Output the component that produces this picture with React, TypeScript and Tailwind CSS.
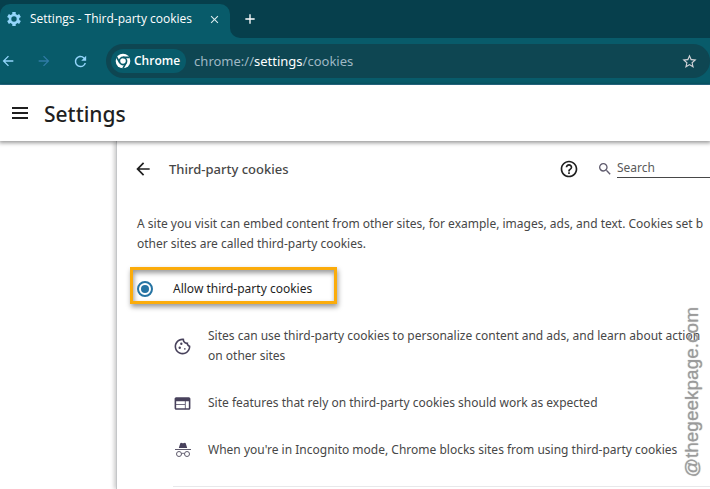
import type { ReactNode } from 'react';
import {
  MdArrowBack,
  MdArrowForward,
  MdClose,
  MdAdd,
  MdHelpOutline,
  MdOutlineCookie,
  MdRefresh,
  MdSearch,
  MdStarBorder,
  MdWeb,
} from 'react-icons/md';

interface Feature {
  icon: ReactNode;
  lines: string[];
}

function GearIcon() {
  return (
    <svg viewBox="0 0 16 16" className="size-4 shrink-0" fill="none" stroke="#93d5fb" aria-hidden="true">
      <circle cx="8" cy="8" r="4" strokeWidth="2.6" />
      <path
        d="M8 1v3M8 12v3M2 4.5l2.5 1.5M11.5 10l2.5 1.5M2 11.5 4.5 10M11.5 6 14 4.5"
        strokeWidth="3.4"
      />
    </svg>
  );
}

function ChromeIcon() {
  return (
    <svg viewBox="0 0 24 24" className="size-4 shrink-0" aria-hidden="true">
      <circle cx="12" cy="12" r="11" fill="#fff" />
      <circle cx="12" cy="12" r="5.4" fill="none" stroke="#085b6a" strokeWidth="2.4" />
      <path d="M12 6.6h10M7.3 14.7 2.3 6M16.7 14.7l-5 8.7" stroke="#085b6a" strokeWidth="2.4" />
    </svg>
  );
}

function MenuIcon() {
  return (
    <svg viewBox="0 0 16 12" className="h-3 w-4" fill="currentColor" aria-hidden="true">
      <path d="M0 0h16v2H0zM0 5h16v2H0zM0 10h16v2H0z" />
    </svg>
  );
}

function IncognitoIcon() {
  return (
    <svg viewBox="0 0 16 16" className="size-4" fill="none" aria-hidden="true">
      <path d="M3.8 6 5.2 1.6c.2-.7.8-.9 1.4-.7L8 1.3l1.4-.4c.6-.2 1.2 0 1.4.7L12.2 6z" fill="#48425c" />
      <path d="M0 7.5h16" stroke="#5f5b6d" />
      <circle cx="4" cy="12" r="2.5" stroke="#5f5b6d" />
      <circle cx="12" cy="12" r="2.5" stroke="#5f5b6d" />
      <path d="M6.5 11.8c1-.7 2-.7 3 0" stroke="#5f5b6d" />
    </svg>
  );
}

const features: Feature[] = [
  {
    icon: <MdOutlineCookie className="size-[19px]" />,
    lines: [
      'Sites can use third-party cookies to personalize content and ads, and learn about action',
      'on other sites',
    ],
  },
  {
    icon: <MdWeb className="size-[19px]" />,
    lines: ['Site features that rely on third-party cookies should work as expected'],
  },
  {
    icon: <IncognitoIcon />,
    lines: ["When you're in Incognito mode, Chrome blocks sites from using third-party cookies"],
  },
];

function TabStrip() {
  return (
    <div className="flex h-[38px] bg-[#063f4c] pt-1">
      <div className="flex w-[230px] items-center rounded-t-[10px] bg-[#085b6a] pl-[6px] pr-2 pb-1">
        <GearIcon />
        <span className="ml-2 flex-1 whitespace-nowrap font-['Open_Sans',sans-serif] text-[12px] text-white">
          Settings - Third-party cookies
        </span>
        <button aria-label="Close tab" className="flex size-4 items-center justify-center text-[#dcecef]">
          <MdClose className="size-[13px]" />
        </button>
      </div>
      {/* Curved foot of the active tab */}
      <div className="size-[10px] self-end bg-[#085b6a]">
        <div className="size-full rounded-bl-[10px] bg-[#063f4c]" />
      </div>
      <button aria-label="New tab" className="mb-1 flex w-5 items-center justify-center text-white">
        <MdAdd className="size-4" />
      </button>
    </div>
  );
}

function Toolbar() {
  return (
    <div className="flex h-[47px] items-center border-b border-[#2b7593] bg-[#085b6a]">
      <div className="flex w-[106px] shrink-0 items-center gap-5 text-[#93d5fb]">
        <button aria-label="Back">
          <MdArrowBack className="size-4" />
        </button>
        <button aria-label="Forward" className="text-[#2f7ba5]">
          <MdArrowForward className="size-4" />
        </button>
        <button aria-label="Reload">
          <MdRefresh className="size-[17px]" />
        </button>
      </div>
      <div className="flex h-[34px] min-w-0 flex-1 items-center rounded-full bg-[#0e4652] pl-[5px] pr-3">
        <span className="flex h-6 items-center gap-[3px] rounded-full bg-[#085b6a] pl-1 pr-[6px] font-['Open_Sans',sans-serif] text-[12px] font-semibold text-white">
          <ChromeIcon />
          Chrome
        </span>
        <span className="ml-2 flex-1 text-[13px] text-[#9fb8c4]">
          chrome://<span className="text-white">settings</span>/cookies
        </span>
        <button aria-label="Bookmark this page" className="text-[#d3d3d8]">
          <MdStarBorder className="size-[17px]" />
        </button>
      </div>
    </div>
  );
}

export default function App() {
  return (
    <div className="relative flex min-h-screen flex-col overflow-hidden bg-white font-['Noto_Sans',sans-serif] text-[12px] leading-5 text-[#474747]">
      <TabStrip />
      <Toolbar />

      <header className="relative z-10 flex h-14 items-center gap-4 bg-white pl-3 text-[#1f1f1f] shadow-[0_1px_4px_1px_rgba(0,0,0,0.4)]">
        <button aria-label="Main menu">
          <MenuIcon />
        </button>
        <h1 className="pt-[2px] text-[21px] font-medium">Settings</h1>
      </header>

      <div className="flex flex-1">
        <aside className="w-[116px] shrink-0" />
        <main className="min-w-0 flex-1 border-l border-[#c4c6c8] pt-[14px] shadow-[-2px_0_4px_rgba(0,0,0,0.2)]">
          <div className="flex h-7 items-center pl-4">
            <button aria-label="Back to privacy settings" className="text-[#1f1f1f]">
              <MdArrowBack className="size-5" />
            </button>
            <h2 className="ml-4 flex-1 text-[13px] font-medium">Third-party cookies</h2>
            <a href="#help" aria-label="Help" className="text-[#1f1f1f]">
              <MdHelpOutline className="size-5" />
            </a>
            <label htmlFor="search" aria-label="Search settings" className="ml-[18px] text-[#5f5b6d]">
              <MdSearch className="size-4" />
            </label>
            <input
              id="search"
              type="search"
              placeholder="Search"
              className="ml-1 h-[18px] w-[93px] border-b border-[#474747] pb-px text-[12px] outline-none placeholder:text-[#5a5a5a]"
            />
          </div>

          <p className="mt-[31px] whitespace-nowrap pl-5">
            A site you visit can embed content from other sites, for example, images, ads, and text. Cookies set b
            <br />
            other sites are called third-party cookies.
          </p>

          <div className="ml-[13px] mt-[13px] flex h-[37px] w-[207px] items-center border-3 border-[#fbac0b] pl-1 pt-[7px] shadow-[1px_3px_5px_rgba(0,0,0,0.4),inset_1px_3px_5px_rgba(0,0,0,0.4)]">
            <input
              id="allow"
              type="radio"
              name="cookies"
              defaultChecked
              className="size-4 shrink-0 appearance-none rounded-full border-2 border-[#2674a3] bg-[#2674a3] bg-clip-content p-[2px]"
            />
            <label htmlFor="allow" className="ml-5 whitespace-nowrap text-[#1f1f1f]">
              Allow third-party cookies
            </label>
          </div>

          <ul className="ml-14 mt-[22px] flex flex-col gap-[27px] border-b border-[#e8e8ea] pb-[26px]">
            {features.map((feature) => (
              <li key={feature.lines[0]} className="flex items-center">
                <span className="flex w-[19px] shrink-0 justify-center text-[#48425c]">{feature.icon}</span>
                <p className="ml-4 whitespace-nowrap">
                  {feature.lines.map((line) => (
                    <span key={line} className="block">
                      {line}
                    </span>
                  ))}
                </p>
              </li>
            ))}
          </ul>
        </main>
      </div>

      {/* Watermark */}
      <div className="absolute bottom-3 right-[6px] z-20 rotate-180 font-['Liberation_Sans',sans-serif] text-[19px] leading-6 text-[#999]/85 text-shadow-[0_0_1px_#999] [writing-mode:vertical-rl]">
        @thegeekpage.com
      </div>
    </div>
  );
}
